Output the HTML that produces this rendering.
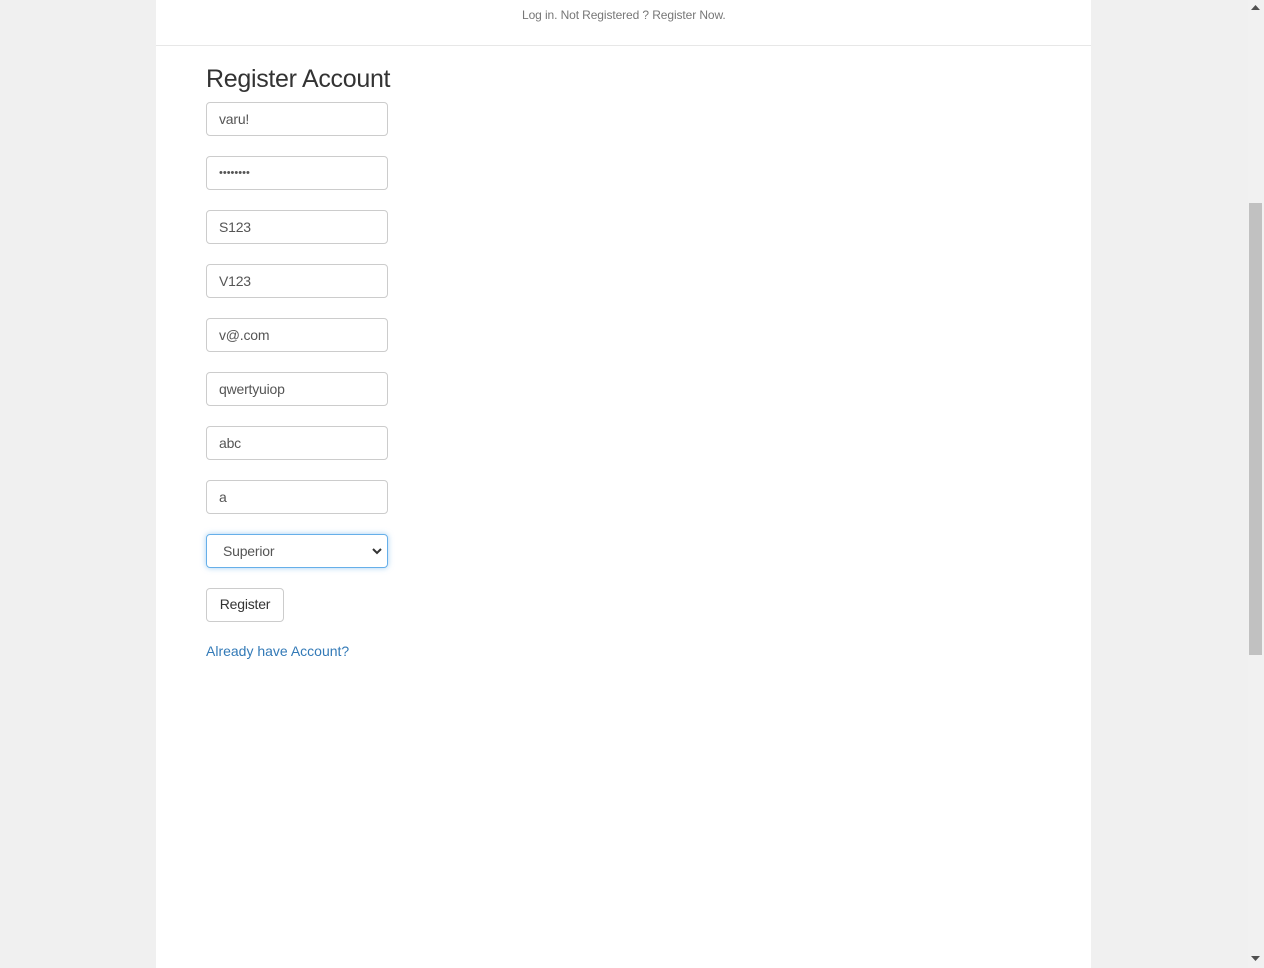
<!DOCTYPE html>
<html><head><meta charset="utf-8"><style>
*{box-sizing:border-box;margin:0;padding:0}
body{width:1264px;height:968px;background:#f0f0f0;font-family:"Liberation Sans",sans-serif;overflow:hidden;position:relative}
.wrap{position:absolute;left:156px;top:0;width:935px;height:968px;background:#fff}
.nav{height:46px;border-bottom:1px solid #e7e7e7;font-size:12px;color:#777}
.nav span{position:absolute;left:366px;top:8px;letter-spacing:-0.1px}
h2{position:absolute;left:50px;top:65px;font-size:25px;font-weight:normal;color:#333;letter-spacing:-0.3px}
.in{position:absolute;left:50px;width:182px;height:34px;border:1px solid #ccc;border-radius:4px;font-size:14px;color:#555;padding:8px 12px;line-height:16px;letter-spacing:-0.2px}
.sel{border-color:#66afe9;box-shadow:0 0 6px rgba(102,175,233,.6);padding-left:16px}
.sel svg{position:absolute;right:5px;top:12px}
.btn{position:absolute;left:50px;top:588px;width:78px;height:34px;border:1px solid #ccc;border-radius:4px;font-size:14px;color:#333;text-align:center;line-height:31px;letter-spacing:-0.2px}
.lnk{position:absolute;left:50px;top:643px;font-size:14px;color:#337ab7;letter-spacing:0}
.sb{position:absolute;left:1248px;top:0;width:16px;height:968px;background:#f1f1f1}
.th{position:absolute;left:1249px;top:203px;width:13px;height:452px;background:#c1c1c1}
</style></head><body>
<div class="wrap">
<div class="nav"><span>Log in. Not Registered ? Register Now.</span></div>
<h2>Register Account</h2>
<div class="in" style="top:102px">varu!</div>
<div class="in" style="top:156px;font-size:11px;letter-spacing:0">••••••••</div>
<div class="in" style="top:210px">S123</div>
<div class="in" style="top:264px">V123</div>
<div class="in" style="top:318px">v@.com</div>
<div class="in" style="top:372px">qwertyuiop</div>
<div class="in" style="top:426px">abc</div>
<div class="in" style="top:480px">a</div>
<div class="in sel" style="top:534px">Superior<svg width="10" height="8" viewBox="0 0 10 8"><path d="M1 2l4 4 4-4" stroke="#333" stroke-width="2" fill="none"/></svg></div>
<div class="btn">Register</div>
<div class="lnk">Already have Account?</div>
</div>
<div class="sb"></div><div class="th"></div>
<svg style="position:absolute;left:1251px;top:5px" width="9" height="6"><path d="M4.5 0L9 5H0z" fill="#505050"/></svg>
<svg style="position:absolute;left:1251px;top:956px" width="9" height="6"><path d="M0 0h9L4.5 5z" fill="#505050"/></svg>
</body></html>
